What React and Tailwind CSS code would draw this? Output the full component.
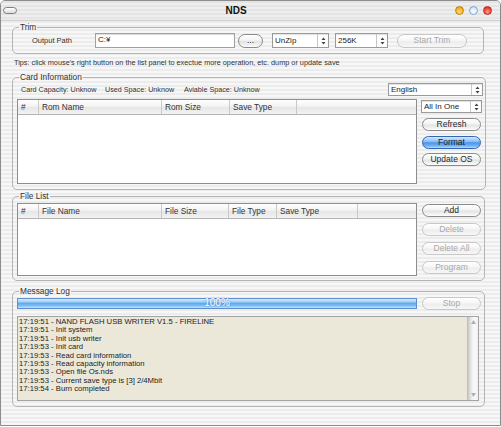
import { clsx } from 'clsx';

const sans = "font-[family-name:'Liberation_Sans',Arial,sans-serif]";
const stripes = "bg-[repeating-linear-gradient(180deg,#ececec_0px,#ececec_2px,#f7f7f7_2px,#f7f7f7_4px)]";

function AquaButton({ children, className, disabled, primary }) {
    return (
        <div
            className={clsx(
                "flex items-center justify-center rounded-full border text-[8.5px] leading-none",
                primary
                    ? "border-[#3466b4] text-[#1a1a1a] bg-[linear-gradient(180deg,#d3e8ff_0%,#8cc0f7_40%,#4f97ec_52%,#6fb0f4_80%,#b6dcff_100%)]"
                    : disabled
                        ? "border-[#c8c8c8] text-[#a9a9a9] bg-[linear-gradient(180deg,#ffffff_0%,#f6f6f6_45%,#ededed_55%,#f7f7f7_100%)]"
                        : "border-[#8a8a8a] text-[#2a2a2a] bg-[linear-gradient(180deg,#ffffff_0%,#f3f3f3_45%,#e3e3e3_55%,#f3f3f3_85%,#ffffff_100%)]",
                className
            )}
        >
            {children}
        </div>
    );
}

function Select({ value, className }) {
    return (
        <div className={clsx("flex items-stretch bg-white border border-[#9a9a9a] shadow-[inset_0_1px_1px_rgba(0,0,0,0.12)]", className)}>
            <span className="flex-1 pl-[2px] flex items-center text-[8px] leading-none text-[#222]">{value}</span>
            <span className="w-[11px] border-l border-[#c6c6c6] flex items-center justify-center">
                <svg width="5" height="8" viewBox="0 0 5 8">
                    <path d="M2.5 0.5 L4.5 3 H0.5Z M0.5 5 H4.5 L2.5 7.5Z" fill="#444" />
                </svg>
            </span>
        </div>
    );
}

function Group({ label, className, children }) {
    return (
        <fieldset className={clsx("border border-[#b4b4b4] rounded-[5px] px-[3px]", className)}>
            <legend className="ml-[3px] px-[1px] text-[8.3px] leading-[12px] text-[#333]">{label}</legend>
            {children}
        </fieldset>
    );
}

function Table({ cols, className }) {
    return (
        <div className={clsx("bg-white border border-[#8e8e8e] flex flex-col", className)}>
            <div className="flex h-[15px] border-b border-[#b3b3b3] bg-[linear-gradient(180deg,#ffffff_0%,#f1f1f1_50%,#e6e6e6_51%,#f2f2f2_100%)]">
                {cols.map(([label, w], i) => (
                    <div
                        key={i}
                        className={clsx("flex items-center pl-[3px] text-[8.3px] leading-none text-[#333]", w, i < cols.length - 1 && "border-r border-[#c9c9c9]")}
                    >
                        {label}
                    </div>
                ))}
            </div>
        </div>
    );
}

const logLines = [
    "17:19:51 - NAND FLASH USB WRITER V1.5 - FIRELINE",
    "17:19:51 - Init system",
    "17:19:51 - Init usb writer",
    "17:19:53 - Init card",
    "17:19:53 - Read card information",
    "17:19:53 - Read capacity information",
    "17:19:53 - Open file Os.nds",
    "17:19:53 - Current save type is [3] 2/4Mbit",
    "17:19:54 - Burn completed",
];

export default function App() {
    return (
        <div className={clsx("w-[501px] h-[427px] bg-white", sans)}>
            <div className={clsx("w-[501px] h-[426px] border border-[#8c8c8c] rounded-t-[5px] overflow-hidden flex flex-col", stripes)}>
                {/* Title bar */}
                <div className="h-[20px] flex items-center bg-[repeating-linear-gradient(180deg,#e4e4e4_0px,#e4e4e4_2px,#eeeeee_2px,#eeeeee_4px)] border-b border-[#cfcfcf]">
                    <div className="ml-[2px] w-[14px] h-[7px] rounded-full border border-[#7d7d7d] bg-[linear-gradient(180deg,#ffffff,#dcdcdc)]" />
                    <div className="flex-1 text-center text-[10px] font-bold leading-none text-[#111]">NDS</div>
                    <div className="flex items-center gap-[5px] mr-[8px]">
                        <div className="w-[9px] h-[9px] rounded-full border border-[#c77f0a] bg-[radial-gradient(circle_at_50%_70%,#ffe27a_0%,#f6b52a_55%,#d88a0c_100%)]" />
                        <div className="w-[9px] h-[9px] rounded-full border border-[#7ea6d8] bg-[radial-gradient(circle_at_50%_70%,#ffffff_0%,#dcecfb_55%,#a9c9ee_100%)]" />
                        <div className="w-[9px] h-[9px] rounded-full border border-[#b52b22] bg-[radial-gradient(circle_at_50%_70%,#ff9d8a_0%,#ee4a3a_55%,#c22a1f_100%)]" />
                    </div>
                </div>

                <div className="pl-[11px] flex flex-col">
                    {/* Trim */}
                    <Group label="Trim" className="w-[472px] pb-[5px]">
                        <div className="flex items-center h-[15px]">
                            <div className="w-[79px] pl-[16px] text-[7.5px] leading-none text-[#333]">Output Path</div>
                            <div className="w-[140px] h-[15px] bg-white border border-[#a0a0a0] shadow-[inset_0_1px_1px_rgba(0,0,0,0.15)] pl-[2px] pt-[1px] text-[8px] leading-[9px] text-[#222]">C:¥</div>
                            <AquaButton className="ml-[3px] w-[25px] h-[14px]">...</AquaButton>
                            <Select value="UnZip" className="ml-[9px] w-[57px] h-[15px]" />
                            <Select value="256K" className="ml-[6px] w-[53px] h-[15px]" />
                            <AquaButton disabled className="ml-[9px] w-[70px] h-[14px]">Start Trim</AquaButton>
                        </div>
                    </Group>

                    <div className="mt-[3px] h-[12px] pl-[2px] text-[7.3px] leading-[12px] text-[#333] whitespace-nowrap">
                        Tips: click mouse's right button on the list panel to exectue more operation, etc. dump or update save
                    </div>

                    {/* Card Information */}
                    <Group label="Card Information" className="mt-[2px] w-[473px] pb-[5px]">
                        <div className="flex items-center h-[13px]">
                            <div className="flex-1 flex pl-[5px] text-[7.2px] leading-none text-[#333] whitespace-nowrap">
                                <span className="w-[84px]">Card Capacity: Unknow</span>
                                <span className="w-[79px]">Used Space: Unknow</span>
                                <span>Aviable Space: Unknow</span>
                            </div>
                            <Select value="English" className="w-[95px] h-[13px] mr-[-1px]" />
                        </div>
                        <div className="mt-[3px] flex">
                            <Table
                                className="w-[400px] h-[85px] ml-[1px]"
                                cols={[["#", "w-[21px]"], ["Rom Name", "w-[123px]"], ["Rom Size", "w-[68px]"], ["Save Type", "w-[67px]"], ["", "flex-1"]]}
                            />
                            <div className="ml-[4px] flex flex-col">
                                <Select value="All In One" className="mt-[1px] w-[61px] h-[13px]" />
                                <AquaButton className="mt-[5px] ml-[1px] w-[59px] h-[13px]">Refresh</AquaButton>
                                <AquaButton primary className="mt-[5px] ml-[1px] w-[59px] h-[13px]">Format</AquaButton>
                                <AquaButton className="mt-[4px] ml-[1px] w-[59px] h-[13px]">Update OS</AquaButton>
                            </div>
                        </div>
                    </Group>

                    {/* File List */}
                    <Group label="File List" className="w-[473px] pb-[4px]">
                        <div className="mt-[1px] flex">
                            <Table
                                className="w-[400px] h-[73px] ml-[1px]"
                                cols={[["#", "w-[21px]"], ["File Name", "w-[123px]"], ["File Size", "w-[67px]"], ["File Type", "w-[48px]"], ["Save Type", "w-[81px]"], ["", "flex-1"]]}
                            />
                            <div className="ml-[5px] flex flex-col gap-[6px]">
                                <AquaButton className="mt-[1px] w-[59px] h-[13px]">Add</AquaButton>
                                <AquaButton disabled className="w-[59px] h-[13px]">Delete</AquaButton>
                                <AquaButton disabled className="w-[59px] h-[13px]">Delete All</AquaButton>
                                <AquaButton disabled className="w-[59px] h-[13px]">Program</AquaButton>
                            </div>
                        </div>
                    </Group>

                    {/* Message Log */}
                    <Group label="Message Log" className="mt-[4px] w-[472px] pb-[5px]">
                        <div className="flex items-center h-[12px]">
                            <div className="ml-[1px] w-[400px] h-[11px] border border-[#5d8fcd] flex items-center justify-center bg-[linear-gradient(180deg,#d8edff_0%,#a3d1f8_30%,#62aaee_50%,#80bdf3_75%,#c5e3fd_100%)]">
                                <span className="text-[10px] leading-none text-white [text-shadow:0_0_2px_#3b78c0]">100%</span>
                            </div>
                            <AquaButton disabled className="ml-[5px] w-[59px] h-[13px]">Stop</AquaButton>
                        </div>
                        <div className="mt-[7px] ml-[1px] w-[462px] h-[85px] bg-[#ebe8da] border border-[#a3a3a3] flex">
                            <div className="flex-1 pt-[1px] pl-[1px] text-[7.7px] leading-[8.4px] text-[#222] whitespace-nowrap">
                                {logLines.map((l, i) => (
                                    <div key={i}>{l}</div>
                                ))}
                            </div>
                            <div className="w-[11px] border-l border-[#bdbdbd] flex flex-col justify-between items-center py-[3px] bg-[linear-gradient(90deg,#c9c9c9_0%,#e6e6e6_30%,#fbfbfb_60%,#f0f0f0_100%)]">
                                <svg width="5" height="4" viewBox="0 0 5 4"><path d="M2.5 0 L5 4 H0Z" fill="#b0b0b0" /></svg>
                                <svg width="5" height="4" viewBox="0 0 5 4"><path d="M0 0 H5 L2.5 4Z" fill="#b0b0b0" /></svg>
                            </div>
                        </div>
                    </Group>
                </div>
            </div>
        </div>
    );
}
